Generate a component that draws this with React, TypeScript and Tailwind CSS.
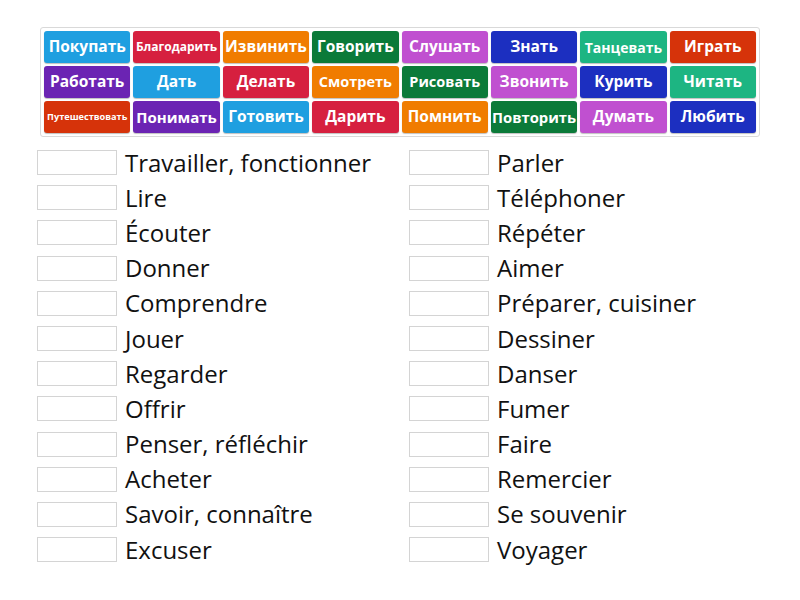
const tiles = [
  { word: "Покупать", color: "bg-[#1f9fe0]", size: "text-[15.5px]" },
  { word: "Благодарить", color: "bg-[#d6203f]", size: "text-[12px]" },
  { word: "Извинить", color: "bg-[#f07c00]", size: "text-[15.5px]" },
  { word: "Говорить", color: "bg-[#0b7a39]", size: "text-[15.5px]" },
  { word: "Слушать", color: "bg-[#c050d0]", size: "text-[15.5px]" },
  { word: "Знать", color: "bg-[#1c2fc0]", size: "text-[15.5px]" },
  { word: "Танцевать", color: "bg-[#1db582]", size: "text-[14px]" },
  { word: "Играть", color: "bg-[#d6330a]", size: "text-[15.5px]" },
  { word: "Работать", color: "bg-[#6b24b3]", size: "text-[15.5px]" },
  { word: "Дать", color: "bg-[#1f9fe0]", size: "text-[15.5px]" },
  { word: "Делать", color: "bg-[#d6203f]", size: "text-[15.5px]" },
  { word: "Смотреть", color: "bg-[#f07c00]", size: "text-[14.5px]" },
  { word: "Рисовать", color: "bg-[#0b7a39]", size: "text-[14.5px]" },
  { word: "Звонить", color: "bg-[#c050d0]", size: "text-[15.5px]" },
  { word: "Курить", color: "bg-[#1c2fc0]", size: "text-[15.5px]" },
  { word: "Читать", color: "bg-[#1db582]", size: "text-[15.5px]" },
  { word: "Путешествовать", color: "bg-[#d6330a]", size: "text-[9.2px]" },
  { word: "Понимать", color: "bg-[#6b24b3]", size: "text-[15px]" },
  { word: "Готовить", color: "bg-[#1f9fe0]", size: "text-[15.5px]" },
  { word: "Дарить", color: "bg-[#d6203f]", size: "text-[15.5px]" },
  { word: "Помнить", color: "bg-[#f07c00]", size: "text-[15.5px]" },
  { word: "Повторить", color: "bg-[#0b7a39]", size: "text-[14.8px]" },
  { word: "Думать", color: "bg-[#c050d0]", size: "text-[15.5px]" },
  { word: "Любить", color: "bg-[#1c2fc0]", size: "text-[15.5px]" },
];

const left = [
  "Travailler, fonctionner",
  "Lire",
  "Écouter",
  "Donner",
  "Comprendre",
  "Jouer",
  "Regarder",
  "Offrir",
  "Penser, réfléchir",
  "Acheter",
  "Savoir, connaître",
  "Excuser",
];

const right = [
  "Parler",
  "Téléphoner",
  "Répéter",
  "Aimer",
  "Préparer, cuisiner",
  "Dessiner",
  "Danser",
  "Fumer",
  "Faire",
  "Remercier",
  "Se souvenir",
  "Voyager",
];

const Row = ({ label }: { label: string }) => (
  <div className="flex h-[35.2px] items-center">
    <div className="h-[25px] w-[80px] shrink-0 border border-[#d4d4d4] bg-white" />
    <span className="ml-[8px] text-[24px] leading-none text-[#111]">
      {label}
    </span>
  </div>
);

export default function App() {
  return (
    <div
      className="h-[600px] w-[800px] bg-white"
      style={{ fontFamily: '"Open Sans", "Noto Sans", sans-serif' }}
    >
      <div className="pt-[27px] pl-[40px]">
        <div className="grid w-[720px] grid-cols-8 gap-[3px] rounded-[3px] border border-[#d9d9d9] p-[3px]">
          {tiles.map((t) => (
            <div
              key={t.word}
              className={`flex h-[32px] items-center justify-center overflow-hidden whitespace-nowrap rounded-[3px] font-bold text-white shadow-[0_1px_1px_rgba(0,0,0,0.25)] ${t.color} ${t.size}`}
            >
              {t.word}
            </div>
          ))}
        </div>
      </div>

      <div className="flex pt-[8px]">
        <div className="flex w-[409px] flex-col pl-[37px]">
          {left.map((l) => (
            <Row key={l} label={l} />
          ))}
        </div>
        <div className="flex flex-col">
          {right.map((r) => (
            <Row key={r} label={r} />
          ))}
        </div>
      </div>
    </div>
  );
}
